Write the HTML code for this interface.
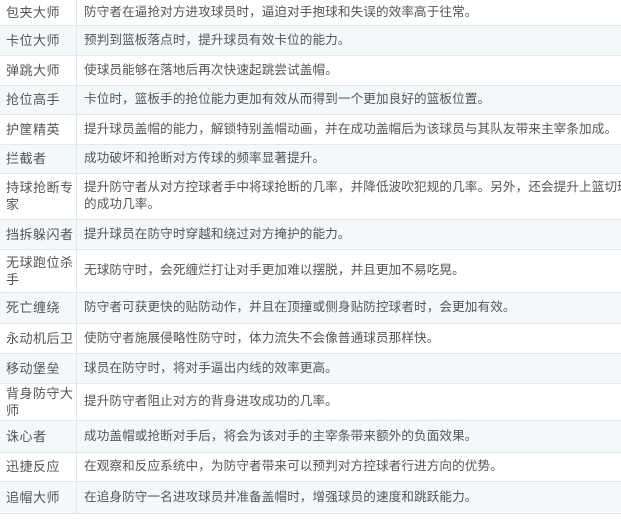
<!DOCTYPE html>
<html><head><meta charset="utf-8"><style>
html,body{margin:0;padding:0;background:#fff;width:621px;height:527px;overflow:hidden}
table{border-collapse:collapse;width:621px;font-family:"Liberation Sans","Noto Sans CJK SC",sans-serif;font-size:12.6px;letter-spacing:0.1px;color:#555;table-layout:fixed}
td{border-bottom:1px solid #dfe9ed;padding:0 0 0 6px;vertical-align:middle;line-height:17px;overflow:hidden}
td:first-child{width:70px;border-right:1px solid #dfe9ed;letter-spacing:0.5px;font-size:13px}
td:last-child{padding-left:7px;white-space:nowrap}
tr:nth-child(even){background:#f3f8fa}
</style></head><body>
<table>
<tr style="height:25px"><td>包夹大师</td><td>防守者在逼抢对方进攻球员时，逼迫对手抱球和失误的效率高于往常。</td></tr>
<tr style="height:30px"><td>卡位大师</td><td>预判到篮板落点时，提升球员有效卡位的能力。</td></tr>
<tr style="height:30px"><td>弹跳大师</td><td>使球员能够在落地后再次快速起跳尝试盖帽。</td></tr>
<tr style="height:29px"><td>抢位高手</td><td>卡位时，篮板手的抢位能力更加有效从而得到一个更加良好的篮板位置。</td></tr>
<tr style="height:30px"><td>护筐精英</td><td>提升球员盖帽的能力，解锁特别盖帽动画，并在成功盖帽后为该球员与其队友带来主宰条加成。</td></tr>
<tr style="height:29px"><td>拦截者</td><td>成功破坏和抢断对方传球的频率显著提升。</td></tr>
<tr style="height:46px"><td>持球抢断专家</td><td>提升防守者从对方控球者手中将球抢断的几率，并降低波吹犯规的几率。另外，还会提升上篮切球<br>的成功几率。</td></tr>
<tr style="height:30px"><td>挡拆躲闪者</td><td>提升球员在防守时穿越和绕过对方掩护的能力。</td></tr>
<tr style="height:43px"><td>无球跑位杀手</td><td>无球防守时，会死缠烂打让对手更加难以摆脱，并且更加不易吃晃。</td></tr>
<tr style="height:31px"><td>死亡缠绕</td><td>防守者可获更快的贴防动作，并且在顶撞或侧身贴防控球者时，会更加有效。</td></tr>
<tr style="height:30px"><td>永动机后卫</td><td>使防守者施展侵略性防守时，体力流失不会像普通球员那样快。</td></tr>
<tr style="height:30px"><td>移动堡垒</td><td>球员在防守时，将对手逼出内线的效率更高。</td></tr>
<tr style="height:37px"><td>背身防守大师</td><td>提升防守者阻止对方的背身进攻成功的几率。</td></tr>
<tr style="height:32px"><td>诛心者</td><td>成功盖帽或抢断对手后，将会为该对手的主宰条带来额外的负面效果。</td></tr>
<tr style="height:29px"><td>迅捷反应</td><td>在观察和反应系统中，为防守者带来可以预判对方控球者行进方向的优势。</td></tr>
<tr style="height:32px"><td>追帽大师</td><td>在追身防守一名进攻球员并准备盖帽时，增强球员的速度和跳跃能力。</td></tr>
</table>
</body></html>
